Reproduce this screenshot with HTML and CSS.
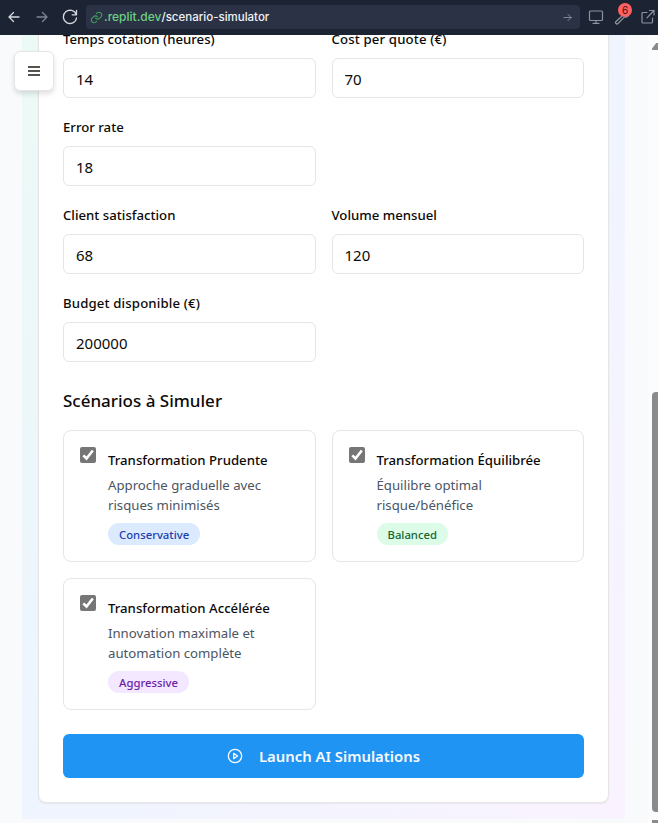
FILE: index.html
```html
<!DOCTYPE html>
<html lang="fr">
<head>
<meta charset="utf-8">
<title>Scenario simulator</title>
<link rel="stylesheet" href="styles.css">
</head>
<body>
<header class="toolbar">
  <svg class="nav" viewBox="0 0 16 16"><path d="M13 8H3M7.500 3.500 3 8l4.500 4.500"/></svg>
  <svg class="nav dim" viewBox="0 0 16 16"><path d="M3 8h10M8.500 3.500 13 8l-4.500 4.500"/></svg>
  <svg class="nav" viewBox="0 0 16 16"><path d="M14.500 1.500v4.300h-4.300M14.200 5.600A6.600 6.600 0 1 0 14.500 9"/></svg>
  <div class="address">
    <svg class="link" viewBox="0 0 24 24"><path d="M10 13a5 5 0 0 0 7.500.5l3-3a5 5 0 0 0-7-7L12 5M14 11a5 5 0 0 0-7.500-.5l-3 3a5 5 0 0 0 7 7L12 19"/></svg>
    <span class="host">.replit.dev</span><span class="path">/scenario-simulator</span>
    <svg class="go" viewBox="0 0 10 10"><path d="M1 5h8M5.500 1.500 9 5 5.500 8.500"/></svg>
  </div>
  <div class="tools">
    <svg class="tool" viewBox="0 0 16 16"><rect x="1.500" y="2" width="13" height="9.500" rx="1"/><path d="M8 11.500v2.500M5 14.300h6"/></svg>
    <div class="wrench">
      <svg class="tool" viewBox="0 0 16 16"><path d="M9.500 4.500a3.600 3.600 0 0 1 4-3l-2 2.200.8 1.400 1.600.3 1-1.500a3.600 3.600 0 0 1-4.500 4.200L4 14.500a1.300 1.300 0 0 1-2-2l6.900-6.200z"/></svg>
      <span class="count">6</span>
    </div>
    <svg class="tool" viewBox="0 0 16 16"><path d="M7 3.500H3a1 1 0 0 0-1 1V13a1 1 0 0 0 1 1h8.500a1 1 0 0 0 1-1V9M9.500 1.500H14V6M14 1.500 7 8.800"/></svg>
  </div>
</header>

<div class="viewport">
  <main class="page">
    <section class="card">
      <div class="fields">
        <div class="field"><label class="label">Temps cotation (heures)</label><input class="input" value="14"></div>
        <div class="field"><label class="label wide">Cost per quote (€)</label><input class="input" value="70"></div>
        <div class="field first"><label class="label">Error rate</label><input class="input" value="18"></div>
        <div class="field first"><label class="label">Client satisfaction</label><input class="input" value="68"></div>
        <div class="field"><label class="label">Volume mensuel</label><input class="input" value="120"></div>
        <div class="field first"><label class="label wide">Budget disponible (€)</label><input class="input" value="200000"></div>
      </div>
      <h3 class="heading">Scénarios à Simuler</h3>
      <div class="scenarios">
        <article class="scenario">
          <svg class="check" viewBox="0 0 16 16"><path d="m3.300 8.300 3.200 3.200 6.300-8"/></svg>
          <div>
            <div class="title">Transformation Prudente</div>
            <p class="text">Approche graduelle avec<br>risques minimisés</p>
            <span class="badge blue">Conservative</span>
          </div>
        </article>
        <article class="scenario">
          <svg class="check" viewBox="0 0 16 16"><path d="m3.300 8.300 3.200 3.200 6.300-8"/></svg>
          <div>
            <div class="title">Transformation Équilibrée</div>
            <p class="text">Équilibre optimal<br>risque/bénéfice</p>
            <span class="badge green">Balanced</span>
          </div>
        </article>
        <article class="scenario">
          <svg class="check" viewBox="0 0 16 16"><path d="m3.300 8.300 3.200 3.200 6.300-8"/></svg>
          <div>
            <div class="title">Transformation Accélérée</div>
            <p class="text">Innovation maximale et<br>automation complète</p>
            <span class="badge purple">Aggressive</span>
          </div>
        </article>
      </div>
      <button class="launch">
        <svg class="play" viewBox="0 0 24 24"><circle cx="12" cy="12" r="10"/><path d="m10 8 6 4-6 4z"/></svg>
        <span>Launch AI Simulations</span>
      </button>
    </section>
  </main>
  <div class="scrollbar"><i class="arrow"></i><i class="thumb"></i><i class="end"></i></div>
  <div class="menu"><i></i><i></i><i></i></div>
</div>
</body>
</html>
```
FILE: styles.css
```css
* { box-sizing: border-box; }
body {
  margin: 0;
  height: 823px;
  overflow: hidden;
  display: flex;
  flex-direction: column;
  font-family: "Noto Sans", sans-serif;
  color: #0c0a09;
  background: #f9fafb;
}
svg { flex: none; fill: none; stroke: currentColor; stroke-linecap: round; stroke-linejoin: round; }

.toolbar {
  height: 35px;
  flex: none;
  display: flex;
  align-items: center;
  padding: 0 0 1px 6px;
  background: #1c2333;
  color: #d5d8de;
}
.nav { width: 16px; height: 16px; margin-right: 12px; stroke-width: 1.3; }
.nav.dim { color: #7e8491; }
.address {
  width: 494px;
  height: 24px;
  margin-left: -4px;
  padding: 0 8px 0 4px;
  display: flex;
  align-items: center;
  border-radius: 4px;
  background: #2b3245;
  font: 500 12px/24px Inter, sans-serif;
}
.link { width: 13px; height: 13px; margin-right: 1px; color: #3fa35a; stroke-width: 2; }
.host { color: #6cd083; font-size: 12px; }
.path { color: #f0f2f5; font-size: 11.5px; }
.go { width: 9px; height: 9px; margin-left: auto; color: #8b919e; }
.tools { display: flex; gap: 10px; margin-left: 8px; color: #8d939f; }
.tool { display: block; width: 16px; height: 16px; stroke-width: 1.2; }
.wrench { position: relative; }
.count {
  position: absolute;
  left: 4px;
  top: -6px;
  width: 14px;
  height: 14px;
  border-radius: 50%;
  background: #ff6060;
  color: #431016;
  font: 10px/14px Inter, sans-serif;
  text-align: center;
}

.viewport { position: relative; flex: 1; display: flex; overflow: hidden; }
.page {
  width: 603px;
  height: 784px;
  margin-left: 22px;
  padding: 0 16px;
  background: linear-gradient(to bottom right, #ecfaf6, #eef5fe 45%, #faf3ff);
}
.card {
  height: 803px;
  margin-top: -35px;
  padding: 25px 24px 24px;
  border: 1px solid #e5e5e5;
  border-radius: 8px;
  background: #fff;
  box-shadow: 0 1px 2px rgba(0, 0, 0, .06);
}
.fields, .scenarios { display: grid; grid-template-columns: 1fr 1fr; gap: 16px; }
.field { height: 72px; }
.first { grid-column: 1; }
.label { display: block; height: 24px; margin-bottom: 8px; font-size: 13.200px; font-weight: 500; line-height: 26px; }
.wide { letter-spacing: .14px; }
.input {
  display: block;
  width: 100%;
  height: 40px;
  padding: 2px 12px 0;
  border: 1px solid #e5e5e5;
  border-radius: 6px;
  background: #fff;
  color: inherit;
  font: 15px "Noto Sans", sans-serif;
}
.heading { margin: 24px 0 16px; font-size: 17px; font-weight: 500; line-height: 29px; height: 28px; }
.scenario { height: 132px; padding: 16px; display: flex; gap: 12px; border: 1px solid #e5e5e5; border-radius: 8px; }
.check { width: 16px; height: 16px; border-radius: 2px; background: #767676; color: #fff; stroke-width: 2.600; stroke-linecap: butt; stroke-linejoin: miter; }
.title { height: 24px; font-size: 13.200px; font-weight: 500; line-height: 26px; white-space: nowrap; }
.text { margin: 4px 0 8px; font-size: 13.200px; line-height: 20px; color: #4b5563; }
.badge { display: block; width: fit-content; height: 22px; padding: 0 11px; border-radius: 11px; font-size: 11.300px; font-weight: 500; line-height: 23px; }
.blue { background: #dbeafe; color: #1e40af; }
.green { background: #dcfce7; color: #166534; }
.purple { background: #f3e8ff; color: #6b21a8; }
.launch {
  width: 100%;
  height: 44px;
  margin-top: 24px;
  display: flex;
  align-items: center;
  justify-content: center;
  gap: 16px;
  border: 0;
  border-radius: 6px;
  background: #2094f3;
  color: #f8fafc;
  font: 600 14.850px "Noto Sans", sans-serif;
}
.play { width: 16px; height: 16px; stroke-width: 2; }

.menu {
  position: absolute;
  left: 14px;
  top: 16px;
  width: 40px;
  height: 40px;
  padding: 14px 13px;
  display: flex;
  flex-direction: column;
  gap: 2px;
  border: 1px solid #e5e5e5;
  border-radius: 6px;
  background: #fff;
  box-shadow: 0 3px 5px rgba(0, 0, 0, .12);
}
.menu i { height: 2px; flex: none; background: #57534e; }
.scrollbar { width: 10px; margin-left: auto; padding-left: 4px; overflow: hidden; background: #fcfcfc; }
.scrollbar i { display: block; background: #8b8b8b; }
.arrow { width: 12px; height: 7px; margin-top: 8px; clip-path: polygon(0 100%, 0 80%, 35% 0, 65% 0, 100% 100%); }
.thumb { width: 10px; height: 420px; margin-top: 342px; border-radius: 4px; }
.end { width: 12px; height: 7px; margin-top: 8px; }
```
